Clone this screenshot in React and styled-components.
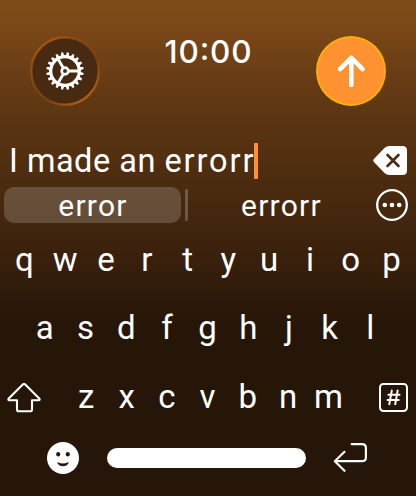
import React from 'react';
import styled, { createGlobalStyle } from 'styled-components';

const GlobalStyle = createGlobalStyle`
  * { box-sizing: border-box; }
  body { margin: 0; background: #251609; }
`;

const Screen = styled.main`
  width: 416px;
  height: 496px;
  overflow: hidden;
  display: flex;
  flex-direction: column;
  color: #fff;
  font-family: Roboto, Inter, sans-serif;
  background: linear-gradient(#7f4b19 0, #7a4718 28px, #603813 100px, #3f240d 235px, #261608 325px, #251609 100%);
`;

const Header = styled.header`
  height: 143px;
  padding: 36px 30px 0;
  display: flex;
  justify-content: space-between;
  align-items: flex-start;
`;

const RoundButton = styled.button`
  width: 70px;
  height: 70px;
  padding: 0;
  border: 0;
  background: none;
  display: block;
`;

const Time = styled.time`
  padding-left: 1px;
  margin-top: -4px;
  font-family: Inter, Roboto, sans-serif;
  font-size: 31.5px;
  line-height: 40px;
  font-weight: 500;
  letter-spacing: 0.9px;
  font-feature-settings: "case" 1, "calt" 1;
`;

const Icon = styled.svg`
  display: block;
  flex: none;
`;

const InputRow = styled.div`
  height: 36px;
  padding: 0 8px 0 9px;
  display: flex;
  align-items: center;
  justify-content: space-between;
`;

const Entry = styled.div`
  height: 36px;
  display: flex;
  align-items: center;
  font-size: 32.5px;
  line-height: 37px;
  white-space: pre;
`;

const Words = styled.span`
  letter-spacing: ${(p) => p.$tracking}px;
`;

const Caret = styled.span`
  width: 4px;
  height: 36px;
  margin-left: -1.7px;
  border-radius: 1px;
  background: #ff9230;
`;

const Suggestions = styled.div`
  height: 36px;
  margin-top: 8px;
  padding: 0 8px 0 4px;
  display: flex;
  align-items: center;
  justify-content: space-between;
`;

const Suggestion = styled.div`
  width: ${(p) => p.$width}px;
  height: 36px;
  padding-left: 1px;
  border-radius: 10px;
  background: ${(p) => (p.$active ? 'rgba(255,255,255,0.18)' : 'transparent')};
  font-size: 30px;
  line-height: 38px;
  letter-spacing: 1.25px;
  text-align: center;
`;

const Divider = styled.span`
  width: 3px;
  height: 32px;
  margin-left: 4px;
  border-radius: 1px;
  background: rgba(255, 255, 255, 0.22);
`;

const Choices = styled.div`
  display: flex;
  align-items: center;
`;

const KeyRow = styled.div`
  height: 68px;
  padding: ${(p) => p.$pad};
  display: flex;
  align-items: center;
`;

const Key = styled.span`
  width: ${(p) => p.$width}px;
  flex: none;
  text-align: center;
  font-size: 33px;
  line-height: 40px;
`;

const Keyboard = styled.section`
  padding-top: 2px;
`;

const LetterKeys = styled.div`
  display: flex;
  margin: ${(p) => p.$margin || 0};
`;

const BottomRow = styled.footer`
  height: 36px;
  margin-top: 11px;
  padding: 0 47px;
  display: flex;
  align-items: center;
`;

const SpaceBar = styled.span`
  width: 199px;
  height: 20px;
  margin: 0 27px 0 28px;
  border-radius: 10px;
  background: #fff;
`;

const teeth = Array.from({ length: 20 }, (_, i) => i * 18 + 9);

const Gear = () => (
  <Icon width="70" height="70" viewBox="0 0 70 70" fill="none">
    <defs>
      <linearGradient id="rim" x1="0.1" y1="0.15" x2="0.75" y2="0.95">
        <stop offset="0" stopColor="#a65510" />
        <stop offset="0.35" stopColor="#93500f" stopOpacity=".7" />
        <stop offset="0.65" stopColor="#8f4c10" stopOpacity=".6" />
        <stop offset="1" stopColor="#b35c0f" />
      </linearGradient>
    </defs>
    <circle cx="35" cy="35" r="34.5" fill="#482a12" />
    <circle cx="35" cy="35" r="33.8" stroke="url(#rim)" strokeWidth="2.4" />
    <circle cx="35" cy="35" r="14.3" stroke="#fff" strokeWidth="3.2" />
    {teeth.map((a) => (
      <path key={a} d="M33.2 20.5L34 16.3H36L36.8 20.5Z" fill="#fff" transform={`rotate(${a} 35 35)`} />
    ))}
    <circle cx="35" cy="35" r="3.3" stroke="#fff" strokeWidth="2.7" />
    <path d="M39 35H49M33 31.5L27.8 22.5M33 38.5L27.8 47.5" stroke="#fff" strokeWidth="2.8" />
  </Icon>
);

const Send = () => (
  <Icon width="70" height="70" viewBox="0 0 70 70" fill="none">
    <circle cx="35" cy="35" r="35" fill="#ffae05" />
    <circle cx="35" cy="35" r="33" fill="#ff9230" />
    <path d="M35.3 49V22M24 33.2L35.3 21.8L46.6 33.2" stroke="#fff" strokeWidth="4.6" strokeLinecap="round" strokeLinejoin="round" />
  </Icon>
);

const Backspace = () => (
  <Icon width="35" height="30" viewBox="0 0 35 30" fill="none">
    <path d="M.9 13L11.5 2.1Q13.5 0 16.5 0H29.5Q34 0 34 4.5V24.5Q34 29 29.5 29H16.5Q13.5 29 11.5 26.9L.9 16Q-.4 14.5.9 13Z" fill="#fff" />
    <path d="M14.5 9L25.5 20M25.5 9L14.5 20" stroke="#4d2d12" strokeWidth="2.6" strokeLinecap="round" />
  </Icon>
);

const More = () => (
  <Icon width="32" height="32" viewBox="0 0 32 32" fill="none">
    <circle cx="16" cy="16" r="14.8" stroke="#fff" strokeWidth="2.3" />
    <circle cx="8.8" cy="16" r="2.3" fill="#fff" />
    <circle cx="16" cy="16" r="2.3" fill="#fff" />
    <circle cx="23.2" cy="16" r="2.3" fill="#fff" />
  </Icon>
);

const Shift = () => (
  <Icon width="34" height="30" viewBox="0 0 34 30" fill="none">
    <path d="M15.8 1.6Q17 .4 18.2 1.6L32 15.2Q33.5 17.2 31.5 17.3H25V26.5Q25 28.3 23.2 28.3H11.8Q10 28.3 10 26.5V17.3H2.5Q.5 17.2 2 15.2Z" stroke="#fff" strokeWidth="2.1" strokeLinejoin="round" />
  </Icon>
);

const Hash = () => (
  <Icon width="29" height="29" viewBox="0 0 29 29" fill="none">
    <rect x="1" y="1" width="27" height="27" rx="3.4" stroke="#fff" strokeWidth="2" />
    <path d="M12.8 7.4L10.3 21.3M18.7 7.4L16.2 21.3M9.4 11.7H20.5M8.6 17H19.7" stroke="#fff" strokeWidth="2" strokeLinecap="round" />
  </Icon>
);

const Smile = () => (
  <Icon width="32" height="32" viewBox="0 0 32 32" fill="none">
    <circle cx="16" cy="16" r="16" fill="#fff" />
    <ellipse cx="11.2" cy="12.2" rx="2" ry="2.2" fill="#251609" />
    <ellipse cx="20.8" cy="12.2" rx="2" ry="2.2" fill="#251609" />
    <path d="M10.8 20.2Q16 22.6 21.2 20.2Q22 20.2 21.6 21Q19.8 24.2 16 24.2T10.4 21Q10 20.2 10.8 20.2Z" fill="#251609" />
  </Icon>
);

const Return = () => (
  <Icon width="35" height="30" viewBox="0 0 35 30" fill="none">
    <path d="M18.7 1.2H29Q32.9 1.2 32.9 5V14.5Q32.9 18.2 29 18.2H2M11.5 8.8L1.8 18.2L11.5 27.8" stroke="#fff" strokeWidth="2.2" strokeLinecap="round" strokeLinejoin="round" />
  </Icon>
);

const letters = (word, width) =>
  word.split('').map((c) => <Key key={c} $width={width}>{c}</Key>);

export default function App() {
  return (
    <Screen>
      <GlobalStyle />
      <Header>
        <RoundButton aria-label="Settings"><Gear /></RoundButton>
        <Time>10:00</Time>
        <RoundButton aria-label="Send"><Send /></RoundButton>
      </Header>
      <InputRow>
        <Entry>
          <Words $tracking={0.5}>{'I made an '}</Words>
          <Words $tracking={1.9}>errorr</Words>
          <Caret />
        </Entry>
        <Backspace />
      </InputRow>
      <Suggestions>
        <Choices>
          <Suggestion $active $width={177}>error</Suggestion>
          <Divider />
          <Suggestion $width={186}>errorr</Suggestion>
        </Choices>
        <More />
      </Suggestions>
      <Keyboard>
        <KeyRow $pad="2px 0 0 4px">{letters('qwertyuiop', 40.8)}</KeyRow>
        <KeyRow $pad="2px 0 0 24.5px">{letters('asdfghjkl', 40.7)}</KeyRow>
        <KeyRow $pad="5px 8px 0 7px">
          <Shift />
          <LetterKeys $margin="-2px 30px 0 25px">{letters('zxcvbnm', 40.4)}</LetterKeys>
          <Hash />
        </KeyRow>
      </Keyboard>
      <BottomRow>
        <Smile />
        <SpaceBar />
        <Return />
      </BottomRow>
    </Screen>
  );
}
